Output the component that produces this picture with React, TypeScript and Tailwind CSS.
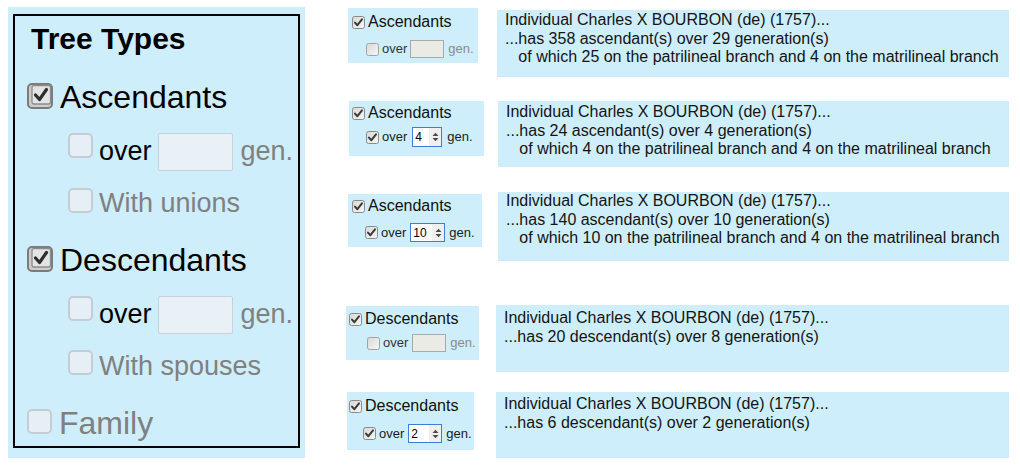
import React from "react";

const BLUE = "bg-[#cfeefb]";

function BigCheck({ checked, className = "" }: { checked: boolean; className?: string }) {
  if (checked) {
    return (
      <svg width="26" height="26" viewBox="0 0 26 26" className={"flex-none " + className}>
        <rect x="1" y="1" width="24" height="24" rx="4" fill="#cdcdcd" stroke="#7b7b7b" strokeWidth="2" />
        <rect x="5" y="2.5" width="18.5" height="18.5" rx="2" fill="#e4e4e4" stroke="#8c8c8c" strokeWidth="1.3" />
        <path d="M8.5 12 L12.5 16.5 L19.5 6.5" fill="none" stroke="#2e2e2e" strokeWidth="3.2" strokeLinecap="round" strokeLinejoin="round" />
      </svg>
    );
  }
  return (
    <span
      className={
        "block w-[25px] h-[25px] flex-none rounded-[5px] border-2 border-[#c4cdd4] bg-[#e7eff6] " + className
      }
    />
  );
}

function SmallCheck({ checked, className = "" }: { checked: boolean; className?: string }) {
  return (
    <svg width="13" height="13" viewBox="0 0 13 13" className={"flex-none " + className}>
      <defs>
        <linearGradient id="cg" x1="0" y1="0" x2="1" y2="1">
          <stop offset="0" stopColor="#d8d8d8" />
          <stop offset="1" stopColor="#f7f7f7" />
        </linearGradient>
      </defs>
      <rect x="0.5" y="0.5" width="12" height="12" rx="2" fill="url(#cg)" stroke={checked ? "#8a8a8a" : "#a3a3a3"} />
      {checked && (
        <path d="M3 6.6 L5.4 9.2 L10 3.4" fill="none" stroke="#3a3a3a" strokeWidth="2" strokeLinecap="round" strokeLinejoin="round" />
      )}
    </svg>
  );
}

function Spinner() {
  return (
    <span className="flex h-full w-[12px] flex-none items-center justify-center bg-[#efefef]">
      <svg width="7" height="10" viewBox="0 0 7 10">
        <path d="M0.5 4 L3.5 0.8 L6.5 4 Z" fill="#4a4a4a" />
        <path d="M0.5 6 L3.5 9.2 L6.5 6 Z" fill="#4a4a4a" />
      </svg>
    </span>
  );
}

type OptProps = {
  label: string;
  boxCls: string;
  subCls: string;
  cbCls: string;
  inputCls: string;
  overCls: string;
  genCls: string;
  value?: string;
};

function OptBox({ label, boxCls, subCls, cbCls, inputCls, overCls, genCls, value }: OptProps) {
  const on = value !== undefined;
  return (
    <div className={BLUE + " flex-none flex flex-col " + boxCls}>
      <div className="flex h-[18px] items-center">
        <SmallCheck checked={true} />
        <span className="ml-[3px] flex-none text-[16px] leading-[18px] text-[#111]">{label}</span>
      </div>
      <div className={"flex items-center " + subCls}>
        <SmallCheck checked={on} className={cbCls} />
        <span className={"flex-none text-[13px] leading-[16px] " + overCls + (on ? " text-[#1a1a1a]" : " text-[#333]")}>over</span>
        {on ? (
          <span
            className={
              "flex flex-none items-stretch border-[1.5px] border-[#3c7fd8] bg-white pl-[2px] text-[12px] leading-[16px] text-black " +
              inputCls
            }
          >
            <span className="flex-1 self-center">{value}</span>
            <Spinner />
          </span>
        ) : (
          <span className={"block flex-none border border-[#a9a9a9] bg-[#ebebe6] " + inputCls} />
        )}
        <span className={"flex-none text-[13px] leading-[16px] " + genCls + (on ? " text-[#1a1a1a]" : " text-[#8a8a8a]")}>gen.</span>
      </div>
    </div>
  );
}

function Info({ cls, lines }: { cls: string; lines: string[] }) {
  return (
    <div className={BLUE + " flex-1 pl-[8px] text-[16px] leading-[18.5px] text-[#141414] " + cls}>
      {lines.map((l, i) => (
        <div key={i} className="whitespace-pre">
          {l}
        </div>
      ))}
    </div>
  );
}

const L1 = "Individual Charles X BOURBON (de) (1757)...";
const IND = "\u00a0\u00a0\u00a0";

function OverRow({ mt }: { mt: string }) {
  return (
    <div className={"ml-[41px] flex h-[38px] items-start " + mt}>
      <BigCheck checked={false} />
      <span className="ml-[6px] mt-[5px] flex-none text-[27px] leading-[27px] text-black">over</span>
      <span className="ml-[6px] block h-[38px] w-[75px] flex-none rounded-[2px] border border-[#c7d1d8] bg-[#e9f1f7]" />
      <span className="ml-[8px] mt-[5px] flex-none text-[27px] leading-[27px] text-[#808080]">gen.</span>
    </div>
  );
}

export default function App() {
  return (
    <div
      className="flex h-[470px] w-[1020px] items-start overflow-hidden bg-white"
      style={{ fontFamily: '"Liberation Sans", Arial, sans-serif' }}
    >
      {/* Left panel */}
      <div className={BLUE + " ml-[8px] mt-[7px] w-[297px] flex-none px-[5px] pt-[7px] pb-[10px]"}>
        <div className="h-[434px] border-2 border-black px-[12px]">
          <div className="ml-[4px] mt-[8px] text-[30px] font-bold leading-[30px] text-black">Tree Types</div>

          <div className="mt-[27px] flex items-start">
            <BigCheck checked className="mt-[2px]" />
            <span className="ml-[7px] flex-none text-[32px] leading-[32px] text-black">Ascendants</span>
          </div>

          <OverRow mt="mt-[20px]" />

          <div className="ml-[41px] mt-[17px] flex h-[29px] items-start">
            <BigCheck checked={false} />
            <span className="ml-[6px] mt-[2px] flex-none text-[27px] leading-[27px] text-[#808080]">With unions</span>
          </div>

          <div className="mt-[27px] flex items-start">
            <BigCheck checked className="mt-[2px]" />
            <span className="ml-[7px] flex-none text-[32px] leading-[32px] text-black">Descendants</span>
          </div>

          <OverRow mt="mt-[20px]" />

          <div className="ml-[41px] mt-[16px] flex h-[30px] items-start">
            <BigCheck checked={false} />
            <span className="ml-[6px] mt-[3px] flex-none text-[27px] leading-[27px] text-[#808080]">With spouses</span>
          </div>

          <div className="mt-[27px] flex items-start">
            <BigCheck checked={false} className="mt-[2px]" />
            <span className="ml-[7px] flex-none text-[32px] leading-[32px] text-[#808080]">Family</span>
          </div>
        </div>
      </div>

      {/* Right column */}
      <div className="ml-[41px] flex w-[663px] flex-none flex-col">
        <div className="mt-[8px] flex items-start">
          <div className="w-[150px] flex-none">
            <OptBox
              label="Ascendants"
              boxCls="ml-[2px] w-[130px] h-[55px] pl-[4px] pt-[5px]"
              subCls="mt-[9px] h-[18px]"
              cbCls="ml-[14px]"
              overCls="ml-[3px]"
              inputCls="ml-[3px] w-[34px] h-[18px]"
              genCls="ml-[4px]"
            />
          </div>
          <Info
            cls="ml-[1px] mt-[2px] h-[67px] pt-[1px]"
            lines={[
              L1,
              "...has 358 ascendant(s) over 29 generation(s)",
              IND + "of which 25 on the patrilineal branch and 4 on the matrilineal branch",
            ]}
          />
        </div>

        <div className="mt-[24px] flex items-start">
          <div className="w-[150px] flex-none">
            <OptBox
              label="Ascendants"
              value="4"
              boxCls="ml-[3px] w-[135px] h-[55px] pl-[3px] pt-[3px]"
              subCls="mt-[5px] h-[20px]"
              cbCls="ml-[14px]"
              overCls="ml-[3px]"
              inputCls="ml-[5px] w-[30px] h-[20px]"
              genCls="ml-[5px]"
            />
          </div>
          <Info
            cls="ml-[2px] h-[66px] pt-[2px]"
            lines={[
              L1,
              "...has 24 ascendant(s) over 4 generation(s)",
              IND + "of which 4 on the patrilineal branch and 4 on the matrilineal branch",
            ]}
          />
        </div>

        <div className="mt-[25px] flex items-start">
          <div className="w-[150px] flex-none">
            <OptBox
              label="Ascendants"
              value="10"
              boxCls="ml-[2px] mt-[2px] w-[134px] h-[53px] pl-[4px] pt-[3px]"
              subCls="mt-[8px] h-[19px]"
              cbCls="ml-[13px]"
              overCls="ml-[3px]"
              inputCls="ml-[4px] w-[35px] h-[19px]"
              genCls="ml-[4px]"
            />
          </div>
          <Info
            cls="ml-[2px] h-[69px] pt-0"
            lines={[
              L1,
              "...has 140 ascendant(s) over 10 generation(s)",
              IND + "of which 10 on the patrilineal branch and 4 on the matrilineal branch",
            ]}
          />
        </div>

        <div className="mt-[44px] flex items-start">
          <div className="w-[150px] flex-none">
            <OptBox
              label="Descendants"
              boxCls="mt-[1px] w-[133px] h-[54px] pl-[3px] pt-[4px]"
              subCls="mt-[6px] h-[18px]"
              cbCls="ml-[18px]"
              overCls="ml-[3px]"
              inputCls="ml-[4px] w-[34px] h-[18px]"
              genCls="ml-[4px]"
            />
          </div>
          <Info
            cls="h-[67px] pt-[4px]"
            lines={[L1, "...has 20 descendant(s) over 8 generation(s)"]}
          />
        </div>

        <div className="mt-[20px] flex items-start">
          <div className="w-[150px] flex-none">
            <OptBox
              label="Descendants"
              value="2"
              boxCls="ml-[1px] w-[127px] h-[58px] pl-[2px] pt-[5px]"
              subCls="mt-[9px] h-[19px]"
              cbCls="ml-[14px]"
              overCls="ml-[3px]"
              inputCls="ml-[4px] w-[34px] h-[19px]"
              genCls="ml-[4px]"
            />
          </div>
          <Info
            cls="h-[66px] pt-[3px]"
            lines={[L1, "...has 6 descendant(s) over 2 generation(s)"]}
          />
        </div>
      </div>
    </div>
  );
}
